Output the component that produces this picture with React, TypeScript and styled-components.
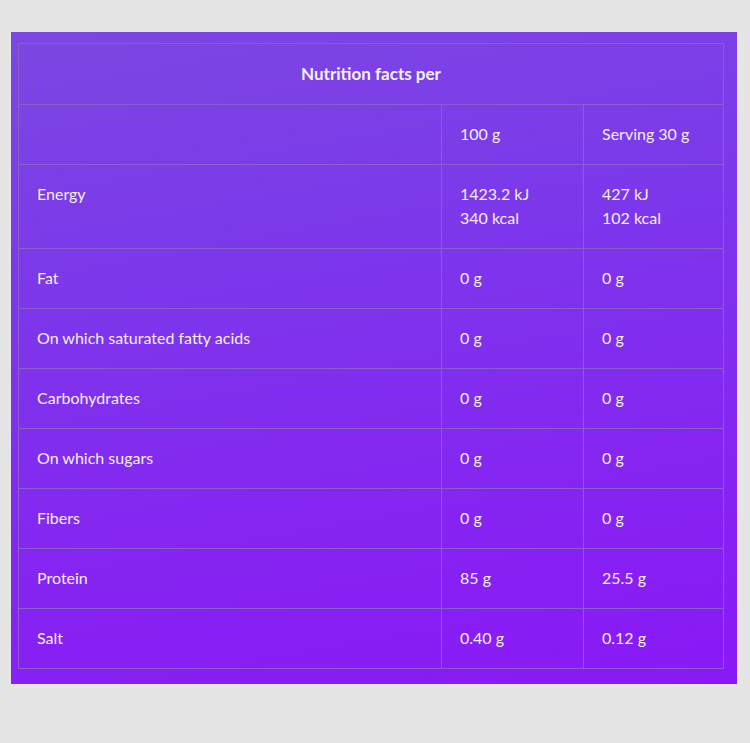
import React, { FC } from 'react';
import styled, { createGlobalStyle } from 'styled-components';

const GlobalStyle = createGlobalStyle`
  html, body {
    margin: 0;
    padding: 0;
    background: #e5e5e5;
  }
  body {
    font-family: Lato, "Noto Sans", sans-serif;
  }
`;

const Page = styled.div`
  width: 750px;
  height: 743px;
  padding: 32px 0 0 11px;
  box-sizing: border-box;
`;

const Card = styled.div`
  width: 726px;
  box-sizing: border-box;
  padding: 11px 13px 15px 7px;
  background: linear-gradient(170deg, #7b47e1 0%, #7b3aea 30%, #8525f1 70%, #8a18f6 100%);
`;

const Table = styled.table`
  width: 706px;
  border-collapse: collapse;
  color: #f4eefc;
  font-size: 16px;
  line-height: 24px;
`;

const HeadCell = styled.th`
  height: 60px;
  padding: 0;
  border: 1px solid #8a5fca;
  text-align: center;
  font-weight: 700;
  font-size: 17px;
  color: #f7f2ff;
`;

const Cell = styled.td<{ $w?: number }>`
  padding: 17px 18px 18px;
  border: 1px solid #8a5fca;
  vertical-align: top;
  text-align: left;
  ${({ $w }) => ($w ? `width: ${$w}px;` : '')}
`;

type Row = { label: string; per100: string[]; serving: string[] };

const rows: Row[] = [
  { label: 'Energy', per100: ['1423.2 kJ', '340 kcal'], serving: ['427 kJ', '102 kcal'] },
  { label: 'Fat', per100: ['0 g'], serving: ['0 g'] },
  { label: 'On which saturated fatty acids', per100: ['0 g'], serving: ['0 g'] },
  { label: 'Carbohydrates', per100: ['0 g'], serving: ['0 g'] },
  { label: 'On which sugars', per100: ['0 g'], serving: ['0 g'] },
  { label: 'Fibers', per100: ['0 g'], serving: ['0 g'] },
  { label: 'Protein', per100: ['85 g'], serving: ['25.5 g'] },
  { label: 'Salt', per100: ['0.40 g'], serving: ['0.12 g'] }
];

const Lines: FC<{ items: string[] }> = ({ items }) => (
  <>
    {items.map((t, i) => (
      <div key={i}>{t}</div>
    ))}
  </>
);

const App: FC = () => {
  return (
    <Page>
      <GlobalStyle />
      <Card>
        <Table>
          <thead>
            <tr>
              <HeadCell colSpan={3}>Nutrition facts per</HeadCell>
            </tr>
          </thead>
          <tbody>
            <tr>
              <Cell $w={386}></Cell>
              <Cell $w={105}>100 g</Cell>
              <Cell>Serving 30 g</Cell>
            </tr>
            {rows.map(r => (
              <tr key={r.label}>
                <Cell>{r.label}</Cell>
                <Cell>
                  <Lines items={r.per100} />
                </Cell>
                <Cell>
                  <Lines items={r.serving} />
                </Cell>
              </tr>
            ))}
          </tbody>
        </Table>
      </Card>
    </Page>
  );
};

export default App;
